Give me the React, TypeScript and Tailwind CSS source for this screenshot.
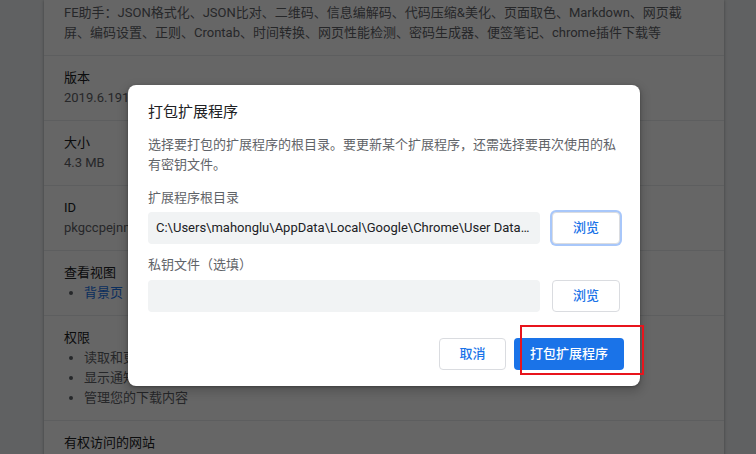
const rows = [
  { label: "版本", value: "2019.6.1911.1" },
  { label: "大小", value: "4.3 MB" },
  { label: "ID", value: "pkgccpejnmalmdinmhkkfafefagiiiad" },
];

const permissions = ["读取和更改您在访问的网站上的所有数据", "显示通知", "管理您的下载内容"];

function DetailsPage() {
  return (
    <div className="min-h-[454px] bg-[#f1f3f4] pl-[44px] pr-[32px]">
      <div className="bg-white text-[13px] leading-5 text-[#202124] shadow-[0_1px_2px_rgba(60,64,67,0.3),0_1px_3px_1px_rgba(60,64,67,0.15)]">
        <div className="border-b border-[#e8eaed] px-5 pt-[3px] pb-3 text-[#5f6368]">
          <div>FE助手：JSON格式化、JSON比对、二维码、信息编解码、代码压缩&amp;美化、页面取色、Markdown、网页截</div>
          <div>屏、编码设置、正则、Crontab、时间转换、网页性能检测、密码生成器、便签笔记、chrome插件下载等</div>
        </div>
        {rows.map((row) => (
          <div key={row.label} className="border-b border-[#e8eaed] px-5 pt-3 pb-3">
            <div>{row.label}</div>
            <div className="text-[#5f6368]">{row.value}</div>
          </div>
        ))}
        <div className="border-b border-[#e8eaed] px-5 pt-3 pb-3">
          <div>查看视图</div>
          <ul className="list-disc pl-5 marker:text-[#5f6368]">
            <li className="text-[#1a73e8]">背景页</li>
          </ul>
        </div>
        <div className="border-b border-[#e8eaed] px-5 pt-3 pb-3">
          <div>权限</div>
          <ul className="list-disc pl-5 text-[#5f6368]">
            {permissions.map((p) => (
              <li key={p}>{p}</li>
            ))}
          </ul>
        </div>
        <div className="px-5 pt-3 pb-3">
          <div>有权访问的网站</div>
        </div>
      </div>
    </div>
  );
}

function PackDialog() {
  return (
    <div className="absolute left-[128px] top-[85px] w-[512px] rounded-lg bg-white pb-4 shadow-[0_4px_8px_3px_rgba(0,0,0,0.15),0_1px_3px_rgba(0,0,0,0.3)]">
      <div className="px-5 pt-4 text-[15px] leading-[22px] text-[#202124]">打包扩展程序</div>
      <div className="px-5 pt-3 text-[13px] leading-5">
        <p className="text-[#5f6368]">
          选择要打包的扩展程序的根目录。要更新某个扩展程序，还需选择要再次使用的私有密钥文件。
        </p>
        <div className="mt-[13px] text-[#5f6368]">扩展程序根目录</div>
        <div className="mt-1 flex items-center gap-3">
          <div className="flex h-8 w-[392px] items-center truncate rounded bg-[#f1f3f4] px-2 text-[#202124]">
            <span className="truncate">C:\Users\mahonglu\AppData\Local\Google\Chrome\User Data\Default\Extensions</span>
          </div>
          <button className="h-8 w-[68px] rounded border border-[#dadce0] bg-white font-medium text-[#1a73e8] ring-2 ring-[#a8c7fa]">
            浏览
          </button>
        </div>
        <div className="mt-[11px] text-[#5f6368]">私钥文件（选填）</div>
        <div className="mt-[5px] flex items-center gap-3">
          <div className="h-8 w-[392px] rounded bg-[#f1f3f4]" />
          <button className="h-8 w-[68px] rounded border border-[#dadce0] bg-white font-medium text-[#1a73e8]">
            浏览
          </button>
        </div>
      </div>
      <div className="relative mt-[26px] flex justify-end gap-2 pr-4 text-[13px]">
        <button className="h-8 w-[67px] rounded border border-[#dadce0] bg-white font-medium text-[#1a73e8]">
          取消
        </button>
        <button className="h-8 w-[110px] rounded bg-[#1a73e8] font-medium text-white">打包扩展程序</button>
        <div className="absolute left-[392px] top-[-13px] h-[50px] w-[124px] border-2 border-[#e8141c]" />
      </div>
    </div>
  );
}

export default function App() {
  return (
    <div
      className="relative h-[454px] w-[756px] overflow-hidden"
      style={{ fontFamily: 'Roboto, "Noto Sans CJK SC", sans-serif' }}
    >
      <DetailsPage />
      <div className="absolute inset-0 bg-black/60" />
      <PackDialog />
    </div>
  );
}
